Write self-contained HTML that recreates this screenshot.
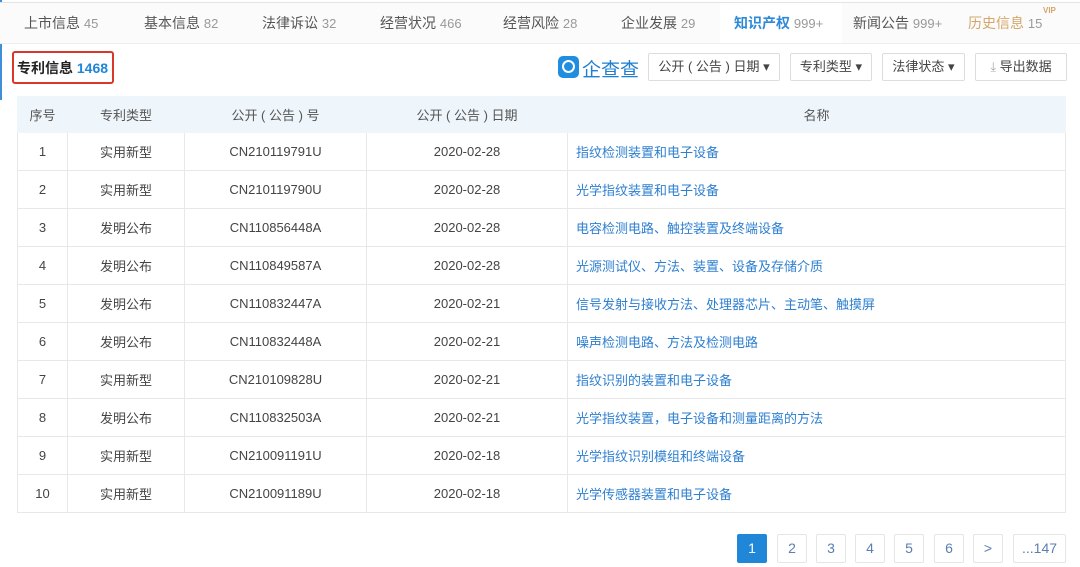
<html><head><style>
body{margin:0;width:1080px;height:567px;background:#fff;font-family:"Liberation Sans","Noto Sans CJK SC",sans-serif;position:relative;overflow:hidden;color:#333}
.tabs{position:absolute;top:2px;left:0;width:1080px;height:40px;border-top:1px solid #e4e4e4;border-bottom:1px solid #eee;background:#fbfbfb}
.tab{position:absolute;top:10px;font-size:14px;color:#555;white-space:nowrap}
.tab span{color:#999;font-size:13px}
.act{position:absolute;left:720px;top:0;width:122px;height:40px;background:#fff}
.title{position:absolute;left:12px;top:51px;width:102px;height:33px;border:2px solid #d9372b;border-radius:3px;box-sizing:border-box;font-size:14px;font-weight:bold;line-height:30px;padding-left:3px;color:#222}
.title b{color:#1f86d8}
.btn{position:absolute;top:53px;height:28px;border:1px solid #ddd;border-radius:2px;font-size:13px;line-height:26px;text-align:center;color:#444;box-sizing:border-box}
table{position:absolute;left:17px;top:96px;width:1049px;border-collapse:collapse;font-size:13px;color:#444}
td,th{border:1px solid #e8e8e8;height:38px;padding:0;text-align:center;font-weight:normal}
th{background:#eef5fb;border-color:#eef5fb;color:#555;height:36px}
td.n{text-align:left;padding-left:8px;color:#2e7fd0}
.pg{position:absolute;top:534px;height:29px;width:30px;border:1px solid #e5e5e5;box-sizing:border-box;font-size:14px;line-height:27px;text-align:center;color:#5b7fb0;border-radius:2px}
</style></head><body>
<div style="position:absolute;left:0;top:0;width:2px;height:100px;background:#3f8fd8"></div>
<div class="tabs">
<div class="act"></div>
<div class="tab" style="left:24px">上市信息 <span>45</span></div>
<div class="tab" style="left:144px">基本信息 <span>82</span></div>
<div class="tab" style="left:262px">法律诉讼 <span>32</span></div>
<div class="tab" style="left:380px">经营状况 <span>466</span></div>
<div class="tab" style="left:503px">经营风险 <span>28</span></div>
<div class="tab" style="left:621px">企业发展 <span>29</span></div>
<div class="tab" style="left:734px;color:#2e8ad8;font-weight:bold">知识产权 <span style="font-weight:normal">999+</span></div>
<div class="tab" style="left:853px">新闻公告 <span>999+</span></div>
<div class="tab" style="left:968px;color:#d4a66a">历史信息 <span>15</span></div>
<div style="position:absolute;left:1043px;top:3px;font-size:8px;color:#d4a66a;font-weight:bold">VIP</div>
</div>
<div class="title">专利信息 <b>1468</b></div>
<div style="position:absolute;left:558px;top:56px;width:21px;height:22px;background:#1f8de0;border-radius:5px"><div style="position:absolute;left:4px;top:4px;width:9px;height:9px;border:2px solid #fff;border-radius:50%"></div></div>
<div style="position:absolute;left:582px;top:55px;font-size:19px;color:#1f7fd0">企查查</div>
<div class="btn" style="left:648px;width:132px">公开 ( 公告 ) 日期 ▾</div>
<div class="btn" style="left:790px;width:82px">专利类型 ▾</div>
<div class="btn" style="left:882px;width:83px">法律状态 ▾</div>
<div class="btn" style="left:975px;width:92px"><span style="color:#aaa">⤓</span> 导出数据</div>
<table>
<tr><th style="width:49px">序号</th><th style="width:116px">专利类型</th><th style="width:181px">公开 ( 公告 ) 号</th><th style="width:200px">公开 ( 公告 ) 日期</th><th>名称</th></tr>
<tr><td>1</td><td>实用新型</td><td>CN210119791U</td><td>2020-02-28</td><td class="n">指纹检测装置和电子设备</td></tr>
<tr><td>2</td><td>实用新型</td><td>CN210119790U</td><td>2020-02-28</td><td class="n">光学指纹装置和电子设备</td></tr>
<tr><td>3</td><td>发明公布</td><td>CN110856448A</td><td>2020-02-28</td><td class="n">电容检测电路、触控装置及终端设备</td></tr>
<tr><td>4</td><td>发明公布</td><td>CN110849587A</td><td>2020-02-28</td><td class="n">光源测试仪、方法、装置、设备及存储介质</td></tr>
<tr><td>5</td><td>发明公布</td><td>CN110832447A</td><td>2020-02-21</td><td class="n">信号发射与接收方法、处理器芯片、主动笔、触摸屏</td></tr>
<tr><td>6</td><td>发明公布</td><td>CN110832448A</td><td>2020-02-21</td><td class="n">噪声检测电路、方法及检测电路</td></tr>
<tr><td>7</td><td>实用新型</td><td>CN210109828U</td><td>2020-02-21</td><td class="n">指纹识别的装置和电子设备</td></tr>
<tr><td>8</td><td>发明公布</td><td>CN110832503A</td><td>2020-02-21</td><td class="n">光学指纹装置，电子设备和测量距离的方法</td></tr>
<tr><td>9</td><td>实用新型</td><td>CN210091191U</td><td>2020-02-18</td><td class="n">光学指纹识别模组和终端设备</td></tr>
<tr><td>10</td><td>实用新型</td><td>CN210091189U</td><td>2020-02-18</td><td class="n">光学传感器装置和电子设备</td></tr>
</table>
<div class="pg" style="left:737px;background:#1f86d8;color:#fff;border-color:#1f86d8">1</div>
<div class="pg" style="left:777px">2</div>
<div class="pg" style="left:816px">3</div>
<div class="pg" style="left:855px">4</div>
<div class="pg" style="left:894px">5</div>
<div class="pg" style="left:934px">6</div>
<div class="pg" style="left:973px">&gt;</div>
<div class="pg" style="left:1013px;width:53px">...147</div>
</body></html>
